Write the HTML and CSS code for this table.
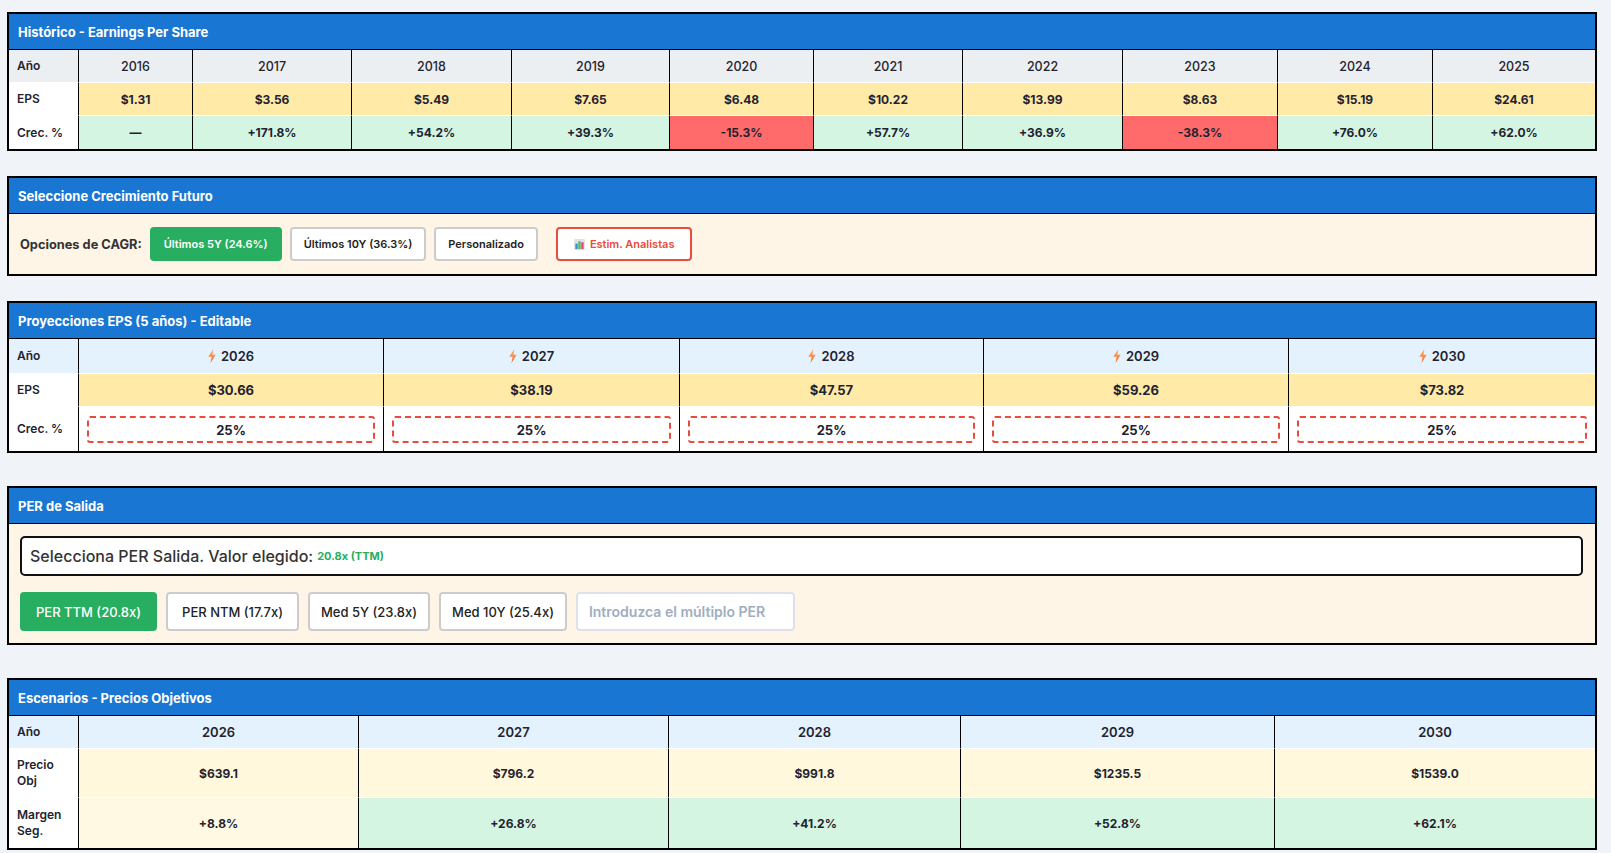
FILE: index.html
```html
<!DOCTYPE html>
<html lang="es">
<head>
<meta charset="utf-8">
<title>EPS</title>
<link rel="stylesheet" href="styles.css">
</head>
<body>
<div class="page">

  <section class="card hist">
    <div class="card-head">Histórico - Earnings Per Share</div>
    <div class="row r-year">
      <div class="cell lbl">Año</div>
      <div class="cell">2016</div><div class="cell">2017</div><div class="cell">2018</div><div class="cell">2019</div><div class="cell">2020</div>
      <div class="cell">2021</div><div class="cell">2022</div><div class="cell">2023</div><div class="cell">2024</div><div class="cell">2025</div>
    </div>
    <div class="row r-eps">
      <div class="cell lbl">EPS</div>
      <div class="cell">$1.31</div><div class="cell">$3.56</div><div class="cell">$5.49</div><div class="cell">$7.65</div><div class="cell">$6.48</div>
      <div class="cell">$10.22</div><div class="cell">$13.99</div><div class="cell">$8.63</div><div class="cell">$15.19</div><div class="cell">$24.61</div>
    </div>
    <div class="row r-growth">
      <div class="cell lbl">Crec. %</div>
      <div class="cell pos">—</div><div class="cell pos">+171.8%</div><div class="cell pos">+54.2%</div><div class="cell pos">+39.3%</div><div class="cell neg">-15.3%</div>
      <div class="cell pos">+57.7%</div><div class="cell pos">+36.9%</div><div class="cell neg">-38.3%</div><div class="cell pos">+76.0%</div><div class="cell pos">+62.0%</div>
    </div>
  </section>

  <section class="card cagr-card">
    <div class="card-head">Seleccione Crecimiento Futuro</div>
    <div class="cagr">
      <span class="cagr-label">Opciones de CAGR:</span>
      <button class="btn on">Últimos 5Y (24.6%)</button>
      <button class="btn">Últimos 10Y (36.3%)</button>
      <button class="btn">Personalizado</button>
      <button class="btn analyst">
        <svg class="chart-ico" viewBox="0 0 12 12" width="11" height="11" aria-hidden="true">
          <rect x="0" y="0" width="12" height="12" rx="1.5" fill="#dfe3e8"/>
          <rect x="1.5" y="5" width="2.6" height="6" fill="#3b8fd8"/>
          <rect x="4.7" y="2.5" width="2.6" height="8.5" fill="#5cb85c"/>
          <rect x="7.9" y="3.5" width="2.6" height="7.5" fill="#e8457c"/>
        </svg>
        Estim. Analistas
      </button>
    </div>
  </section>

  <section class="card proj">
    <div class="card-head">Proyecciones EPS (5 años) - Editable</div>
    <div class="row r-year">
      <div class="cell lbl">Año</div>
      <div class="cell"><svg class="bolt" viewBox="0 0 8 14" width="8" height="14" aria-hidden="true"><defs><linearGradient id="bg1" x1="0" y1="0" x2="0" y2="1"><stop offset="0" stop-color="#ffb36b"/><stop offset="1" stop-color="#f2692a"/></linearGradient></defs><path d="M5.4 0 L0.3 7.8 H3.6 L2.5 14 L7.7 5.8 H4.5 Z" fill="url(#bg1)"/></svg>2026</div>
      <div class="cell"><svg class="bolt" viewBox="0 0 8 14" width="8" height="14" aria-hidden="true"><path d="M5.4 0 L0.3 7.8 H3.6 L2.5 14 L7.7 5.8 H4.5 Z" fill="url(#bg1)"/></svg>2027</div>
      <div class="cell"><svg class="bolt" viewBox="0 0 8 14" width="8" height="14" aria-hidden="true"><path d="M5.4 0 L0.3 7.8 H3.6 L2.5 14 L7.7 5.8 H4.5 Z" fill="url(#bg1)"/></svg>2028</div>
      <div class="cell"><svg class="bolt" viewBox="0 0 8 14" width="8" height="14" aria-hidden="true"><path d="M5.4 0 L0.3 7.8 H3.6 L2.5 14 L7.7 5.8 H4.5 Z" fill="url(#bg1)"/></svg>2029</div>
      <div class="cell"><svg class="bolt" viewBox="0 0 8 14" width="8" height="14" aria-hidden="true"><path d="M5.4 0 L0.3 7.8 H3.6 L2.5 14 L7.7 5.8 H4.5 Z" fill="url(#bg1)"/></svg>2030</div>
    </div>
    <div class="row r-eps">
      <div class="cell lbl">EPS</div>
      <div class="cell">$30.66</div><div class="cell">$38.19</div><div class="cell">$47.57</div><div class="cell">$59.26</div><div class="cell">$73.82</div>
    </div>
    <div class="row r-input">
      <div class="cell lbl">Crec. %</div>
      <div class="cell"><input class="g-input" type="text" value="25%"></div>
      <div class="cell"><input class="g-input" type="text" value="25%"></div>
      <div class="cell"><input class="g-input" type="text" value="25%"></div>
      <div class="cell"><input class="g-input" type="text" value="25%"></div>
      <div class="cell"><input class="g-input" type="text" value="25%"></div>
    </div>
  </section>

  <section class="card per-card">
    <div class="card-head">PER de Salida</div>
    <div class="per-body">
      <div class="per-select">Selecciona PER Salida. Valor elegido: <span class="per-val">20.8x (TTM)</span></div>
      <div class="per-btns">
        <button class="pbtn on">PER TTM (20.8x)</button>
        <button class="pbtn">PER NTM (17.7x)</button>
        <button class="pbtn med">Med 5Y (23.8x)</button>
        <button class="pbtn med">Med 10Y (25.4x)</button>
        <input class="per-input" type="text" placeholder="Introduzca el múltiplo PER">
      </div>
    </div>
  </section>

  <section class="card scen">
    <div class="card-head">Escenarios - Precios Objetivos</div>
    <div class="row r-year">
      <div class="cell lbl">Año</div>
      <div class="cell">2026</div><div class="cell">2027</div><div class="cell">2028</div><div class="cell">2029</div><div class="cell">2030</div>
    </div>
    <div class="row r-price">
      <div class="cell lbl">Precio Obj</div>
      <div class="cell">$639.1</div><div class="cell">$796.2</div><div class="cell">$991.8</div><div class="cell">$1235.5</div><div class="cell">$1539.0</div>
    </div>
    <div class="row r-margin">
      <div class="cell lbl">Margen Seg.</div>
      <div class="cell warn">+8.8%</div><div class="cell pos">+26.8%</div><div class="cell pos">+41.2%</div><div class="cell pos">+52.8%</div><div class="cell pos">+62.1%</div>
    </div>
  </section>

</div>
</body>
</html>
```

FILE: styles.css
```css
* { box-sizing: border-box; }

body {
  margin: 0;
  background: #f0f4f8;
  font-family: Inter, "Liberation Sans", sans-serif;
  color: #1f2330;
}

.page {
  padding: 12px 14px 0 7px;
}

.card {
  border: 2px solid #000;
  background: #fff;
}

.cagr-card, .proj { margin-top: 25px; }
.per-card, .scen { margin-top: 33px; }

.card-head {
  height: 36px;
  display: flex;
  align-items: center;
  padding: 0 9px;
  background: #1976d2;
  color: #fff;
  font-size: 13px;
  font-weight: 700;
  border-bottom: 1px solid #000;
}

/* grid rows */
.row {
  display: grid;
  height: 33px;
}
.hist .row { grid-template-columns: 70px 114px 159px 160px 158px 144px 149px 160px 155px 155px 1fr; }
.proj .row { grid-template-columns: 70px 305px 296px 304px 305px 1fr; }
.scen .row { grid-template-columns: 70px 280px 310px 292px 314px 1fr; }

.cell {
  display: flex;
  align-items: center;
  justify-content: center;
  border-right: 1px solid #000;
  border-bottom: 1px solid #fff;
  font-size: 12px;
  font-weight: 700;
}
.cell:last-child { border-right: 0; }
.row:last-child .cell { border-bottom: 0; }

.cell.lbl {
  justify-content: flex-start;
  padding: 0 8px;
  background: #fff;
  font-weight: 600;
  line-height: 16px;
}

/* historic */
.hist .r-year .cell { background: #eceff1; font-weight: 500; font-size: 12.5px; }
.hist .r-year .cell.lbl { font-weight: 600; font-size: 12px; }
.r-eps .cell:not(.lbl) { background: #ffeaa7; }
.pos { background: #d5f5e3; }
.neg { background: #ff6b6b; }
.warn { background: #fff9e3; }

/* projections */
.proj .r-year { height: 35px; }
.proj .r-year .cell,
.scen .r-year .cell { background: #e3f2fd; }
.proj .r-year .cell:not(.lbl),
.scen .r-year .cell:not(.lbl) { font-size: 13px; font-weight: 600; }
.proj .r-eps .cell:not(.lbl) { font-size: 13px; }
.bolt { margin-right: 5px; }

.r-input { height: 44px; }
.r-input .cell:not(.lbl) { padding: 1px 8px 0; }
.g-input {
  width: 100%;
  height: 27px;
  border: 2px dashed #e74c3c;
  border-radius: 3px;
  background: #fff;
  text-align: center;
  font-family: inherit;
  font-size: 13px;
  font-weight: 700;
  color: #1f2330;
  outline: none;
}

/* CAGR selector */
.cagr {
  display: flex;
  align-items: center;
  gap: 8px;
  padding: 13px 11px;
  background: #fef5e7;
}
.cagr-label {
  font-size: 12.8px;
  font-weight: 700;
  color: #333;
}
.btn {
  height: 34px;
  padding: 0 12px;
  display: flex;
  align-items: center;
  gap: 5px;
  border: 2px solid #ccc;
  border-radius: 4px;
  background: #fff;
  font-family: inherit;
  font-size: 11px;
  font-weight: 600;
  color: #222;
}
.btn.on {
  background: #27ae60;
  border-color: #27ae60;
  color: #fff;
}
.btn.analyst {
  margin-left: 10px;
  padding: 0 16px;
  border-color: #e74c3c;
  color: #e74c3c;
}

/* PER */
.per-body {
  padding: 12px 12px 12px 11px;
  background: #fef5e7;
}
.per-select {
  height: 40px;
  display: flex;
  align-items: center;
  padding-left: 8px;
  border: 2px solid #111;
  border-radius: 5px;
  background: #fff;
  font-size: 16px;
  font-weight: 500;
  color: #333;
}
.per-val {
  margin-left: 4px;
  color: #27ae60;
  font-size: 11px;
  font-weight: 700;
}
.per-btns {
  display: flex;
  gap: 9px;
  margin-top: 16px;
}
.pbtn {
  height: 39px;
  padding: 0 14px;
  border: 2px solid #ccc;
  border-radius: 4px;
  background: #fff;
  font-family: inherit;
  font-size: 13px;
  font-weight: 500;
  color: #222;
}
.pbtn.med { padding: 0 11px; }
.pbtn.on {
  background: #27ae60;
  border-color: #27ae60;
  color: #fff;
}
.per-input {
  width: 219px;
  height: 39px;
  padding: 0 11px;
  border: 2px solid #dde2ea;
  border-radius: 4px;
  background: #fff;
  font-family: inherit;
  font-size: 14px;
  font-weight: 600;
  outline: none;
}
.per-input::placeholder { color: #a0aec0; }

/* scenarios */
.r-price { height: 49px; }
.r-margin { height: 50px; }
.r-price .cell:not(.lbl) { background: #fff8dc; }
```
